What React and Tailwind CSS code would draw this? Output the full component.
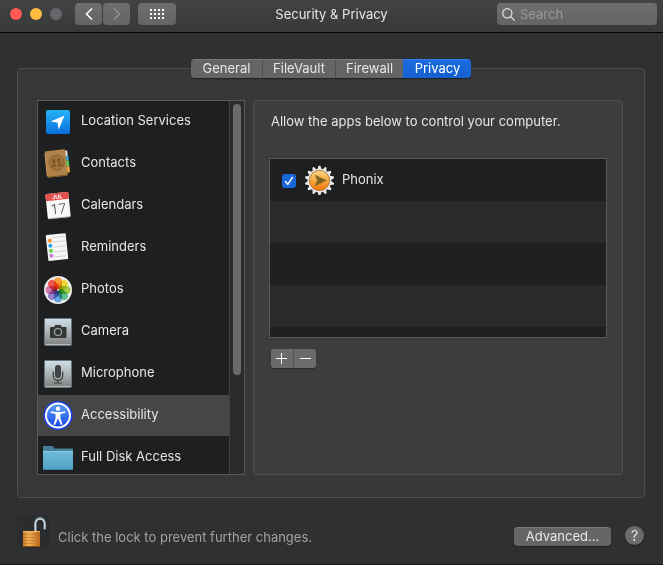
import { useState } from "react";

const TABS = [
  { name: "General", width: "w-[71px]" },
  { name: "FileVault", width: "w-[73px]" },
  { name: "Firewall", width: "w-[68px]" },
  { name: "Privacy", width: "w-[68px]" },
];

function LocationIcon() {
  return (
    <svg width="30" height="30" viewBox="0 0 30 30">
      <defs>
        <linearGradient id="loc" x1="0" y1="0" x2="0" y2="1">
          <stop offset="0" stopColor="#26b4f8" />
          <stop offset="1" stopColor="#0b6fdc" />
        </linearGradient>
      </defs>
      <rect x="3" y="4" width="24" height="24" rx="2" fill="url(#loc)" />
      <path d="M21.500 9.500 7.500 15.500l7 1 1.200 7z" fill="#fff" />
    </svg>
  );
}

function ContactsIcon() {
  return (
    <svg width="30" height="30" viewBox="0 0 30 30">
      <g transform="rotate(-6 15 15)">
        <path d="M22 3.500h3.500V9H22z" fill="#d9dde0" />
        <path d="M22 8.500h4v5h-4z" fill="#35a7e0" />
        <path d="M22 13.500h4v6h-4z" fill="#58c64d" />
        <path d="M22 19.500h4v6h-4z" fill="#f2a33b" />
        <rect x="3" y="2" width="20.500" height="26.500" rx="1.500" fill="#b0824a" />
        <path d="M3 4v23" stroke="#c79a62" />
        <path d="M3.500 28h19.500" stroke="#7c5527" />
        <circle cx="13.700" cy="14.500" r="7.500" fill="#a0743b" stroke="#80592a" strokeWidth=".8" />
        <path d="M8 18.500c.3-2 1.900-2.200 2.400-3-1.600-2-1.300-5.500.6-5.500s2.200 3.500.7 5.500c.3.800 1.300 1 1.500 3zM14.200 18.500c.2-2 .9-2.200 1.400-3-1.600-2-1.200-5.500.6-5.500s2.200 3.500.6 5.500c.4.800 1.900 1 2.200 3z" fill="#80592a" />
      </g>
    </svg>
  );
}

function CalendarIcon() {
  return (
    <svg width="30" height="30" viewBox="0 0 30 30">
      <g transform="rotate(-6 15 15)">
        <rect x="3.500" y="3" width="23" height="25" rx="1.500" fill="#f8f8f8" />
        <path d="M3.500 10V4.500A1.500 1.500 0 0 1 5 3h20a1.500 1.500 0 0 1 1.500 1.500V10z" fill="#e34f4d" />
        <path d="M4 27.800h22" stroke="#a9a9a9" strokeWidth=".8" />
        <text x="15" y="8.700" fontSize="5.500" fontWeight="700" textAnchor="middle" fill="#fff" fontFamily="Inter, sans-serif">JUL</text>
        <text x="15" y="23.800" fontSize="14" textAnchor="middle" fill="#333" fontFamily="Roboto, sans-serif" fontWeight="300">17</text>
      </g>
    </svg>
  );
}

function RemindersIcon() {
  return (
    <svg width="30" height="30" viewBox="0 0 30 30">
      <g transform="rotate(-6 15 15)">
        <rect x="4" y="2" width="20" height="26" rx="1" fill="#f6f6f6" />
        <path d="M10 9.500h13M10 14.500h13M10 19.500h13M10 24.500h13M10 5h13" stroke="#c4c4c4" strokeWidth=".7" />
        <circle cx="7.500" cy="8" r="2" fill="#f7922d" />
        <circle cx="7.500" cy="13" r="2" fill="#25a3ee" />
        <circle cx="7.500" cy="18" r="2" fill="#65d34c" />
        <circle cx="7.500" cy="23" r="2" fill="#c77bdb" />
      </g>
    </svg>
  );
}

const PETALS = ["#f7962c", "#ecd62e", "#9bcb3c", "#4fb985", "#5a9fdc", "#8c78c4", "#d06fa8", "#ee4d43"];

function PhotosIcon() {
  return (
    <svg width="30" height="30" viewBox="0 0 30 30">
      <circle cx="15" cy="16" r="14" fill="#eeeeee" />
      <g className="isolate">
        {PETALS.map((color, i) => (
          <rect
            key={color}
            x="11"
            y="3.500"
            width="8"
            height="12"
            rx="4"
            fill={color}
            fillOpacity=".92"
            className="mix-blend-multiply"
            transform={`rotate(${i * 45} 15 16)`}
          />
        ))}
      </g>
      <circle cx="15" cy="16" r=".8" fill="#fff" />
    </svg>
  );
}

function MetalPlate({ id }) {
  return (
    <>
      <defs>
        <linearGradient id={id} x1="0" y1="0" x2="0" y2="1">
          <stop offset="0" stopColor="#cfe0e9" />
          <stop offset=".5" stopColor="#acb3b6" />
          <stop offset="1" stopColor="#7e7e7d" />
        </linearGradient>
      </defs>
      <rect x="1.500" y="2.500" width="27" height="27" rx="1" fill={`url(#${id})`} stroke="#69747d" />
      <path d="M2.500 28.500h25" stroke="#b7b7b7" />
    </>
  );
}

function CameraIcon() {
  return (
    <svg width="30" height="30" viewBox="0 0 30 30">
      <MetalPlate id="plate-camera" />
      <path d="M8 11h3l1.500-2h5L19 11h3.500q1 0 1 1v9q0 1-1 1H8q-1 0-1-1v-9q0-1 1-1z" fill="#353737" />
      <circle cx="15" cy="16" r="3.800" fill="#4b4e4f" stroke="#a6adb0" strokeWidth="1" />
      <circle cx="15" cy="16" r="2.300" fill="#2d2f30" />
    </svg>
  );
}

function MicrophoneIcon() {
  return (
    <svg width="30" height="30" viewBox="0 0 30 30">
      <MetalPlate id="plate-mic" />
      <rect x="12" y="7" width="6" height="13" rx="3" fill="#404344" />
      <path d="M10.300 13.500v4.200a4.700 4.700 0 0 0 9.400 0v-4.200M15 22.500v2.500M11 25h8" fill="none" stroke="#3a3c3d" strokeWidth="1.200" />
    </svg>
  );
}

function AccessibilityIcon() {
  return (
    <svg width="30" height="30" viewBox="0 0 30 30">
      <defs>
        <linearGradient id="acc" x1="0" y1="0" x2="0" y2="1">
          <stop offset="0" stopColor="#5ba0f5" />
          <stop offset="1" stopColor="#1744e6" />
        </linearGradient>
      </defs>
      <circle cx="15" cy="15.500" r="14.500" fill="#173fe3" />
      <circle cx="15" cy="15.500" r="12" fill="url(#acc)" stroke="#fff" strokeWidth="2" />
      <circle cx="15" cy="8.800" r="2.200" fill="#fff" />
      <path d="m7.800 11.300 5 .7h4.400l5-.7.2 1.500-5 1.300v4l2.100 6.400-1.600.5L15.300 19h-.6l-2.600 6-1.600-.5 2.100-6.400v-4l-5-1.300z" fill="#fff" />
    </svg>
  );
}

function FolderIcon() {
  return (
    <svg width="30" height="30" viewBox="0 0 30 30">
      <defs>
        <linearGradient id="folder" x1="0" y1="0" x2="0" y2="1">
          <stop offset="0" stopColor="#6fbbdb" />
          <stop offset="1" stopColor="#519fc4" />
        </linearGradient>
      </defs>
      <path d="M0 10V5q0-1 1-1h8q1 0 1.500 1l.8 1.500H29q1 0 1 1V10z" fill="#458098" />
      <path d="M0 9h30v18q0 1-1 1H1q-1 0-1-1z" fill="url(#folder)" />
      <path d="M0 9.500h30" stroke="#8bcbe5" />
      <path d="M.5 27.500h29" stroke="#3c85aa" />
    </svg>
  );
}

const SERVICES = [
  { name: "Location Services", Icon: LocationIcon },
  { name: "Contacts", Icon: ContactsIcon },
  { name: "Calendars", Icon: CalendarIcon },
  { name: "Reminders", Icon: RemindersIcon },
  { name: "Photos", Icon: PhotosIcon },
  { name: "Camera", Icon: CameraIcon },
  { name: "Microphone", Icon: MicrophoneIcon },
  { name: "Accessibility", Icon: AccessibilityIcon },
  { name: "Full Disk Access", Icon: FolderIcon },
];

function PhonixIcon() {
  return (
    <svg width="30" height="30" viewBox="0 0 30 30">
      <defs>
        <linearGradient id="phonix" x1="0" y1="0" x2="0" y2="1">
          <stop offset="0" stopColor="#fbd78a" />
          <stop offset=".5" stopColor="#f6a93c" />
          <stop offset="1" stopColor="#f2720c" />
        </linearGradient>
      </defs>
      {[0, 1, 2, 3, 4, 5, 6, 7, 8, 9, 10, 11, 12, 13].map((n) => (
        <path
          key={n}
          d="M13 5.500 14.500 1.200q1-1.200 2 0L18 5.500z"
          fill="#e9e9e9"
          transform={`rotate(${(n * 360) / 14} 15.500 15.500)`}
        />
      ))}
      <circle cx="15.500" cy="15.500" r="11.800" fill="#ececec" />
      <circle cx="15.500" cy="15.500" r="10.200" fill="url(#phonix)" stroke="#a9733c" strokeWidth=".9" />
      <path d="M11 10 22.500 15.500 11 21l2.300-5.500z" fill="#7f6220" stroke="#a37d2c" strokeWidth=".5" />
    </svg>
  );
}

function LockIcon() {
  return (
    <svg width="33" height="33" viewBox="0 0 33 33">
      <defs>
        <linearGradient id="lock" x1="0" y1="0" x2="1" y2="0">
          <stop offset="0" stopColor="#c9781f" />
          <stop offset=".35" stopColor="#f2b45c" />
          <stop offset="1" stopColor="#b96615" />
        </linearGradient>
      </defs>
      <path d="M18.500 17V8.500a4.600 5.500 0 0 1 9.200 0V14.500" fill="none" stroke="#738591" strokeWidth="2.600" />
      <path d="M18.300 16V8.500a4.800 5.500 0 0 1 9.400 0V14" fill="none" stroke="#d5e2e9" strokeWidth="1.300" />
      <rect x="6" y="16" width="17" height="16" rx="1" fill="url(#lock)" />
      <path d="M6 19.500h17M6 22.500h17M6 25.500h17M6 28.500h17" stroke="#b87527" strokeWidth=".6" />
      <path d="M6 16.500h17" stroke="#efb25d" />
      <path d="M6.500 31.500h16" stroke="#8d4b10" />
    </svg>
  );
}

export default function App() {
  const [tab, setTab] = useState("Privacy");
  const [service, setService] = useState("Accessibility");
  const [allowed, setAllowed] = useState(true);

  return (
    <div className="flex min-h-screen flex-col border-b border-[#1b191c] bg-[#2f3032] font-[Inter,sans-serif] text-[13px] leading-4 font-normal text-[#e6e6e7]">
      <header className="grid h-[33px] grid-cols-[1fr_auto_1fr] items-start border-b border-black bg-linear-to-b from-[#424345] to-[#373839] pt-[3px]">
        <div className="flex items-center">
          <div className="flex gap-2 pl-[10px]">
            <button aria-label="Close" className="size-3 rounded-full bg-[#ff5955]" />
            <button aria-label="Minimize" className="size-3 rounded-full bg-[#ffbc40]" />
            <button aria-label="Zoom" disabled className="size-3 rounded-full bg-[#66676a]" />
          </div>
          <div className="ml-[13px] flex gap-px">
            <button aria-label="Back" className="flex h-[22px] w-[27px] items-center justify-center rounded-[4px] bg-linear-to-b from-[#6d6e70] to-[#636466]">
              <svg width="8" height="14" viewBox="0 0 8 14" fill="none" stroke="#fff" strokeWidth="1.600"><path d="M7 1.500 1.500 7 7 12.500" /></svg>
            </button>
            <button aria-label="Forward" disabled className="flex h-[22px] w-[27px] items-center justify-center rounded-[4px] bg-linear-to-b from-[#6d6e70] to-[#636466]">
              <svg width="8" height="14" viewBox="0 0 8 14" fill="none" stroke="#939496" strokeWidth="1.400"><path d="M1 1.500 6.500 7 1 12.500" /></svg>
            </button>
          </div>
          <button aria-label="Show All" className="ml-2 flex h-[22px] w-[38px] items-center justify-center rounded-[4px] bg-linear-to-b from-[#6d6e70] to-[#636466]">
            <svg width="14" height="10" viewBox="0 0 14 10" fill="#fff">
              {[0, 4, 8].map((y) => [0, 4, 8, 12].map((x) => <rect key={`${x}-${y}`} x={x} y={y} width="2" height="2" />))}
            </svg>
          </button>
        </div>
        <h1 className="leading-[22px]">Security &amp; Privacy</h1>
        <label className="mr-[6px] flex h-[22px] w-40 items-center gap-[5px] justify-self-end rounded-[4px] bg-linear-to-b from-[#6d6e70] to-[#636466] px-[5px]">
          <svg width="13" height="13" viewBox="0 0 13 13" fill="none" stroke="#e4e4e5" strokeWidth="1.200" className="shrink-0">
            <circle cx="5.300" cy="5.300" r="4.600" />
            <path d="m8.700 8.700 3.800 3.800" />
          </svg>
          <input type="text" aria-label="Search" placeholder="Search" className="w-full min-w-0 bg-transparent outline-none placeholder:text-[#98999b]" />
        </label>
      </header>

      <main className="mt-[35px] mr-[18px] ml-[17px] rounded-[4px] border border-[#4c4d4f] bg-[#363739] pr-[21px] pb-[22px] pl-[19px]">
        <div className="-mt-[10px] flex justify-center pl-[2px]">
          <div role="tablist" className="flex h-[19px] overflow-hidden rounded-[4px] shadow-[0_1px_1px_#1f2021]">
            {TABS.map(({ name, width }) => (
              <button
                key={name}
                role="tab"
                aria-selected={tab === name}
                onClick={() => setTab(name)}
                className={`${width} border-t border-l pb-[2px] first:border-l-0 ${tab === name ? "border-t-[#2e7ae9] border-l-[#1a68dc] bg-linear-to-b from-[#1b6ce0] to-[#165fce] text-white" : "border-t-[#79797b] border-l-[#4e4f51] bg-[#646567]"}`}
              >
                {name}
              </button>
            ))}
          </div>
        </div>

        <div className="mt-[22px] flex gap-2">
          <nav aria-label="Privacy services" className="flex h-[375px] w-52 shrink-0 border border-[#58595b] bg-[#1e1f21]">
            <ul className="min-w-0 flex-1 overflow-hidden">
              {SERVICES.map(({ name, Icon }) => (
                <li key={name} className="pb-px">
                  <button
                    onClick={() => setService(name)}
                    className={`flex h-[41px] w-full items-start gap-2 px-[5px] pt-[5px] text-left leading-7 ${service === name ? "bg-[#464646]" : ""}`}
                  >
                    <Icon />
                    {name}
                  </button>
                </li>
              ))}
            </ul>
            <div className="w-[15px] border-l border-[#414244] bg-[#2b2b2c] px-[3px] pt-[3px]">
              <div className="h-[271px] w-2 rounded-full bg-[#6b6b6b]" />
            </div>
          </nav>

          <section className="min-w-0 flex-1 rounded-[4px] border border-[#4f5052] bg-[#3c3d3f] px-[15px] pt-3">
            <h2 className="px-[2px]">Allow the apps below to control your computer.</h2>
            <ul className="mt-[29px] h-[180px] overflow-hidden border border-[#58595b] bg-[#1e1f21]">
              <li className="h-[42px]">
                <label className="flex h-full items-center pl-3">
                  <span className="mt-[2px] grid size-[14px] place-items-center">
                    <input
                      type="checkbox"
                      checked={allowed}
                      onChange={() => setAllowed(!allowed)}
                      className="col-start-1 row-start-1 size-[14px] appearance-none rounded-[3px] bg-[#6d6e70] checked:bg-[#1967da]"
                    />
                    {allowed && (
                      <svg width="10" height="10" viewBox="0 0 10 10" fill="none" stroke="#fff" strokeWidth="1.500" strokeLinecap="round" strokeLinejoin="round" className="pointer-events-none col-start-1 row-start-1">
                        <path d="m1.500 5.500 2.300 2.800L8.300 1.500" />
                      </svg>
                    )}
                  </span>
                  <span className="ml-2 flex items-start gap-2 leading-7">
                    <PhonixIcon />
                    Phonix
                  </span>
                </label>
              </li>
              <li className="h-[42px] bg-[#292a2c]" />
              <li className="h-[42px]" />
              <li className="h-[42px] bg-[#292a2c]" />
              <li className="h-[42px]" />
            </ul>
            <div className="mt-[11px] ml-[2px] flex h-[19px] w-[45px] overflow-hidden rounded-[3px] bg-[#6a6b6d] shadow-[0_1px_1px_#2a2b2c]">
              <button aria-label="Add app" className="flex w-[23px] items-center justify-center border-r border-[#525355] pr-px">
                <svg width="11" height="11" viewBox="0 0 11 11" stroke="#fff"><path d="M0 5.500h11M5.500 0v11" /></svg>
              </button>
              <button aria-label="Remove app" className="flex flex-1 items-center justify-center">
                <svg width="11" height="11" viewBox="0 0 11 11" stroke="#fff"><path d="M0 5.500h11" /></svg>
              </button>
            </div>
          </section>
        </div>
      </main>

      <footer className="flex items-center pt-[17px] pr-[19px] pl-[17px]">
        <button aria-label="Lock" className="rounded-[4px] bg-[#2b2c2e]">
          <LockIcon />
        </button>
        <p className="mt-[10px] ml-2 text-[#a0a1a3]">Click the lock to prevent further changes.</p>
        <button className="mt-[10px] ml-auto h-[19px] w-[97px] rounded-[4px] border-t border-[#79797b] bg-[#646567] pb-[2px] shadow-[0_1px_1px_#1f2021]">Advanced...</button>
        <button aria-label="Help" className="mt-2 ml-[14px] size-[19px] rounded-full bg-[#6a6b6d] text-sm leading-[19px] shadow-[0_1px_1px_#1f2021]">?</button>
      </footer>
    </div>
  );
}
